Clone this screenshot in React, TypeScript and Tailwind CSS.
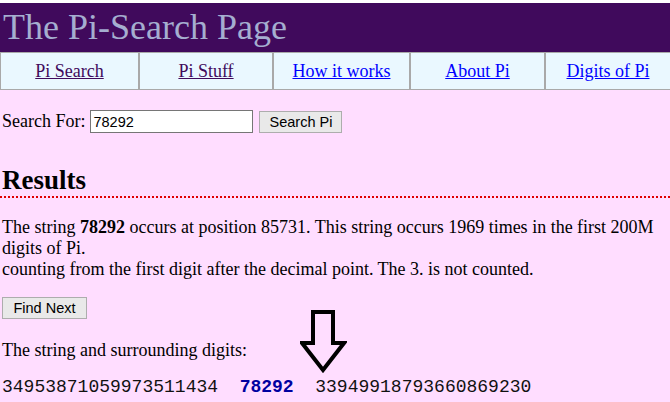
import React from 'react';

const navItems = [
  { label: 'Pi Search', visited: true },
  { label: 'Pi Stuff', visited: true },
  { label: 'How it works', visited: false },
  { label: 'About Pi', visited: false },
  { label: 'Digits of Pi', visited: false },
];

const serif = "font-['Liberation_Serif','Times_New_Roman',serif]";
const sans = "font-['Liberation_Sans',Arial,sans-serif]";

const DownArrow = () => (
  <svg width="47" height="64" viewBox="0 0 47 64" className="absolute left-[300px] top-[-67px]">
    <polygon
      points="13,2 33,2 33,33 44,33 23,60 2,33 13,33"
      fill="none"
      stroke="#000"
      strokeWidth="4"
      strokeLinejoin="miter"
    />
  </svg>
);

const App = () => {
  return (
    <div className={`min-h-[402px] w-[670px] bg-white pt-[3px] ${serif}`}>
      {/* header */}
      <div className="h-[49px] bg-[#400a5c] pl-[3px] text-[36px] leading-[49px] text-[#a5aed0]">
        The Pi-Search Page
      </div>

      <div className="min-h-[350px] bg-[#ffddff] text-[18px] leading-[21px] text-black">
        {/* nav */}
        <div className="grid h-[38px] grid-cols-[137px_134px_137px_135px_1fr] border-y border-l border-[#a9a9a9] bg-[#eaf8ff]">
          {navItems.map((item, i) => (
            <div
              key={item.label}
              className={`flex items-center justify-center ${i > 0 ? 'border-l-2 border-[#a9a9a9]' : ''}`}
            >
              <a
                href="#"
                className={`underline ${item.visited ? 'text-[#400a5c]' : 'text-[#0000ff]'}`}
              >
                {item.label}
              </a>
            </div>
          ))}
        </div>

        {/* search */}
        <div className="mt-[20px] flex items-center pl-[2px]">
          <span>Search For:</span>
          <input
            defaultValue="78292"
            className={`ml-[5px] h-[23px] w-[163px] border border-[#767676] bg-white px-[2px] text-[14.5px] outline-none ${sans}`}
          />
          <button
            className={`ml-[6px] h-[22px] w-[83px] border border-[#adadad] bg-[#e9e9e9] text-[14.5px] leading-[20px] ${sans}`}
          >
            Search Pi
          </button>
        </div>

        {/* results */}
        <h2 className="mt-[32px] border-b-2 border-dotted border-[#e00000] pl-[2px] text-[27px] font-bold leading-[31px]">
          Results
        </h2>

        <p className="mt-[19px] pl-[2px]">
          The string <b>78292</b> occurs at position 85731. This string occurs 1969 times in the first 200M
          digits of Pi.
          <br />
          counting from the first digit after the decimal point. The 3. is not counted.
        </p>

        <button
          className={`ml-[2px] mt-[17px] h-[22px] w-[85px] border border-[#adadad] bg-[#e9e9e9] text-[14.5px] leading-[20px] ${sans}`}
        >
          Find Next
        </button>

        <p className="mt-[21px] pl-[2px]">The string and surrounding digits:</p>

        <div className="relative mt-[16px] pl-[2px]">
          <DownArrow />
          <div className="relative whitespace-pre font-['Liberation_Mono','Courier_New',monospace] text-[18px] leading-[21px] text-[#111]">
            34953871059973511434  <b className="text-[#0000a0]">78292</b>  33949918793660869230
          </div>
        </div>
      </div>
    </div>
  );
};

export default App;
